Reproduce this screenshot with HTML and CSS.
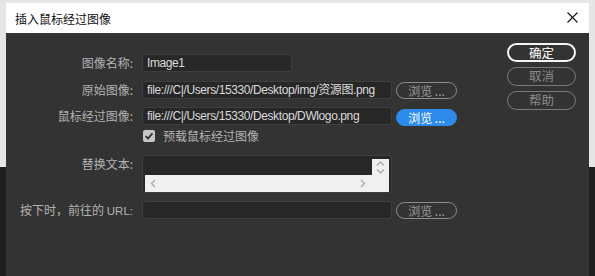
FILE: index.html
```html
<!DOCTYPE html>
<html lang="zh">
<head>
<meta charset="utf-8">
<title>插入鼠标经过图像</title>
<link rel="stylesheet" href="styles.css">
</head>
<body>
<div class="dialog">
  <div class="titlebar">
    <span class="title">插入鼠标经过图像</span>
    <svg class="close" width="11" height="11" viewBox="0 0 11 11"><path d="M0.5 0.5L10.5 10.5M10.5 0.5L0.5 10.5" stroke="#111" stroke-width="1.1" fill="none"/></svg>
  </div>
  <div class="content">
    <div class="form">
      <div class="row r1">
        <div class="label">图像名称:</div>
        <div class="field"><div class="input short">Image1</div></div>
      </div>
      <div class="row r2">
        <div class="label">原始图像:</div>
        <div class="field"><div class="input long">file:///C|/Users/15330/Desktop/img/资源图.png</div><div class="browse">浏览 ...</div></div>
      </div>
      <div class="row r3">
        <div class="label">鼠标经过图像:</div>
        <div class="field"><div class="input long">file:///C|/Users/15330/Desktop/DWlogo.png</div><div class="browse blue">浏览 ...</div></div>
      </div>
      <div class="row r4">
        <div class="label"></div>
        <div class="field check-field">
          <span class="checkbox"><svg width="12" height="12" viewBox="0 0 12 12"><path d="M2.6 6.2L5 8.6L9.4 3.4" stroke="#2c2c2c" stroke-width="1.7" fill="none"/></svg></span>
          <span class="check-label">预载鼠标经过图像</span>
        </div>
      </div>
      <div class="row r5">
        <div class="label">替换文本:</div>
        <div class="field">
          <div class="textarea">
            <div class="ta-grid">
              <div class="ta-text"></div>
              <div class="ta-vs">
                <svg width="9" height="5" viewBox="0 0 9 5"><path d="M1 4.5L4.5 1L8 4.5" stroke="#a8a8a8" stroke-width="1.3" fill="none"/></svg>
                <svg width="9" height="5" viewBox="0 0 9 5"><path d="M1 0.5L4.5 4L8 0.5" stroke="#a8a8a8" stroke-width="1.3" fill="none"/></svg>
              </div>
              <div class="ta-hs">
                <svg width="6" height="9" viewBox="0 0 6 9"><path d="M5 1L1.5 4.5L5 8" stroke="#a8a8a8" stroke-width="1.3" fill="none"/></svg>
                <svg width="6" height="9" viewBox="0 0 6 9"><path d="M1 1L4.5 4.5L1 8" stroke="#a8a8a8" stroke-width="1.3" fill="none"/></svg>
              </div>
              <div class="ta-corner"></div>
            </div>
          </div>
        </div>
      </div>
      <div class="row r6">
        <div class="label">按下时，前往的 <span class="latin">URL:</span></div>
        <div class="field"><div class="input long"></div><div class="browse">浏览 ...</div></div>
      </div>
    </div>
    <div class="actions">
      <div class="btn primary">确定</div>
      <div class="btn">取消</div>
      <div class="btn">帮助</div>
    </div>
  </div>
</div>
</body>
</html>
```

FILE: styles.css
```css
html, body {
  margin: 0;
  padding: 0;
}
body {
  width: 595px;
  height: 276px;
  overflow: hidden;
  background: linear-gradient(#e6e6e6 0, #e6e6e6 167px, #1e1e1e 167px);
  font-family: "Liberation Sans", "Noto Sans CJK SC", sans-serif;
  font-size: 12px;
}
.dialog {
  margin: 3px 6px 0 6px;
  height: 273px;
  display: flex;
  flex-direction: column;
  background: #333333;
}
.titlebar {
  height: 30px;
  background: #ffffff;
  display: flex;
  align-items: center;
  padding: 0 11px 0 9px;
}
.title {
  font-family: "Noto Sans CJK SC", sans-serif;
  color: #111;
  font-size: 12px;
  flex: 1;
}
.close {
  margin-top: -1px;
}
.content {
  flex: 1;
  display: flex;
}
.form {
  display: flex;
  flex-direction: column;
  padding-top: 21px;
}
.row {
  display: flex;
  align-items: flex-start;
}
.r2 { margin-top: 9px; }
.r3 { margin-top: 8px; }
.r4 { margin-top: 3px; height: 14px; }
.r5 { margin-top: 12px; }
.r6 { margin-top: 8px; }
.label {
  width: 127px;
  text-align: right;
  color: #b2b2b2;
  line-height: 18px;
  height: 18px;
  font-family: "Noto Sans CJK SC", sans-serif;
  white-space: nowrap;
}
.latin {
  font-family: "Liberation Sans", sans-serif;
  font-size: 11.5px;
}
.field {
  margin-left: 9px;
  display: flex;
  align-items: flex-start;
}
.input {
  box-sizing: border-box;
  height: 18px;
  border: 1px solid #3e3e3e;
  border-radius: 3px;
  background: #272727;
  color: #dadada;
  line-height: 16px;
  padding-left: 4px;
  white-space: nowrap;
  overflow: hidden;
  font-size: 12px;
  letter-spacing: -0.4px;
}
.short { width: 150px; }
.long { width: 250px; }
.browse {
  box-sizing: border-box;
  margin-left: 4px;
  margin-top: 1px;
  width: 61px;
  height: 17px;
  border: 1px solid #8c8c8c;
  border-radius: 9px;
  color: #9c9c9c;
  text-align: center;
  line-height: 15px;
  font-family: "Noto Sans CJK SC", sans-serif;
}
.browse.blue {
  background: #2d8ceb;
  border-color: #2d8ceb;
  color: #ffffff;
  margin-top: 2px;
}
.check-field {
  align-items: center;
  height: 14px;
}
.checkbox {
  margin-left: 1px;
  width: 12px;
  height: 12px;
  border-radius: 2px;
  background: #c6c6c6;
  display: flex;
}
.check-label {
  margin-left: 8px;
  color: #b2b2b2;
  font-family: "Noto Sans CJK SC", sans-serif;
  line-height: 14px;
}
.textarea {
  box-sizing: border-box;
  width: 250px;
  height: 38px;
  border: 1px solid #3e3e3e;
  border-radius: 3px;
  background: #272727;
  padding: 3px 2px 0 2px;
}
.ta-grid {
  display: grid;
  grid-template-columns: 1fr 17px;
  grid-template-rows: 16px 17px;
}
.ta-vs, .ta-hs, .ta-corner {
  background: #f0f0f0;
}
.ta-vs {
  display: flex;
  flex-direction: column;
  align-items: center;
  justify-content: center;
  gap: 3px;
}
.ta-hs {
  display: flex;
  align-items: center;
  justify-content: space-between;
  padding: 0 6px 0 5px;
}
.actions {
  margin-left: auto;
  margin-right: 13px;
  padding-top: 10px;
  display: flex;
  flex-direction: column;
  gap: 5px;
}
.btn {
  box-sizing: border-box;
  width: 69px;
  height: 19px;
  border: 1.5px solid #7a7a7a;
  border-radius: 10px;
  color: #8a8a8a;
  text-align: center;
  line-height: 16px;
  font-family: "Noto Sans CJK SC", sans-serif;
  font-size: 12.5px;
}
.btn.primary {
  border: 2px solid #f4f4f4;
  color: #ffffff;
  line-height: 15px;
}
```
